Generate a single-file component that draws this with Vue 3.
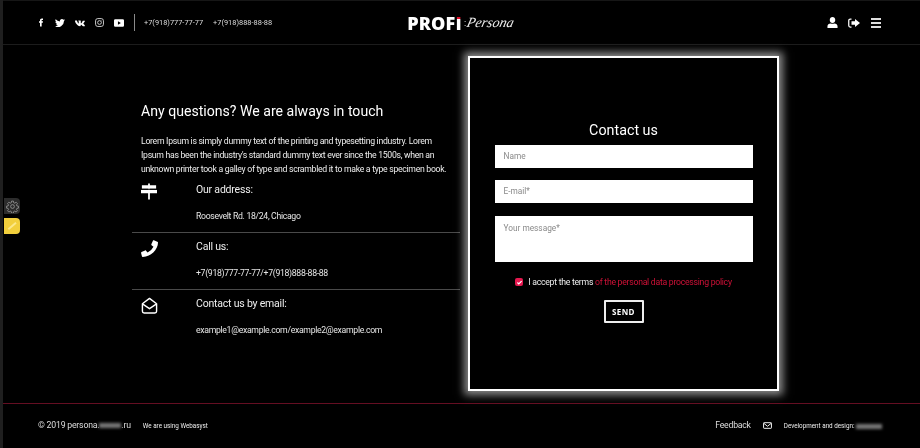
<script setup>
const rows = [
  { title: 'Our address:', text: 'Roosevelt Rd. 18/24, Chicago', icon: 'sign' },
  { title: 'Call us:', text: '+7(918)777-77-77/+7(918)888-88-88', icon: 'phone' },
  { title: 'Contact us by email:', text: 'example1@example.com/example2@example.com', icon: 'mail' }
]
</script>

<template>
  <div class="page">
    <header class="header">
      <div class="head-left">
        <div class="socials">
          <svg viewBox="0 0 24 24" width="8" height="9"><path fill="#fff" d="M14 8V6c0-1 .5-1.500 1.500-1.500H18V0h-3.500C11 0 9 2.200 9 5.500V8H6v4.500h3V24h5V12.500h3.500L18 8z"/></svg>
          <svg viewBox="0 0 24 24" width="10" height="10"><path fill="#fff" d="M24 4.600a10 10 0 0 1-2.800.8 5 5 0 0 0 2.200-2.700 10 10 0 0 1-3.100 1.200 4.900 4.900 0 0 0-8.400 4.500A14 14 0 0 1 1.700 3.200a4.900 4.900 0 0 0 1.500 6.600 5 5 0 0 1-2.200-.6c0 2.400 1.700 4.400 3.900 4.900a5 5 0 0 1-2.200.1 4.900 4.900 0 0 0 4.600 3.400A9.900 9.900 0 0 1 0 19.500 14 14 0 0 0 21.500 7c1-.7 1.900-1.500 2.500-2.400z"/></svg>
          <svg viewBox="0 0 24 24" width="10" height="10"><path fill="#fff" d="M23.500 17.500c-.7-1.300-2.500-2.900-3.400-3.700-.3-.3-.3-.5 0-.9.600-.8 2.500-3.400 3.200-4.700.4-.8.500-1.200.2-1.500-.2-.3-.6-.3-1-.3h-3.300c-.4 0-.7.100-.9.600-.5 1.300-2 4.300-3 5.300-.4.400-.7.400-1 .4-.2 0-.4-.3-.4-.8V7c0-.8-.1-1.300-.9-1.300H8.900c-.5 0-.9.300-.9.600 0 .6.900.7 1 2.600v2.900c0 1-.2 1.100-.4 1.100-.8 0-2.600-2.700-3.600-5.900-.2-.6-.5-.8-1-.8H.9c-.6 0-.9.300-.9.700 0 .7.900 4 4.100 8.200 2.100 2.900 5.100 4.500 7.800 4.500 1.500 0 1.800-.4 1.800-1.100 0-2.300-.1-2.500.6-2.500.4 0 1 .2 2.300 1.500 1.500 1.500 1.800 2.100 2.600 2.100h3.200c.9 0 1.400-.4 1.100-1.300z"/></svg>
          <svg viewBox="0 0 24 24" width="9" height="9" fill="none" stroke="#ccc" stroke-width="2.600"><rect x="1.500" y="1.500" width="21" height="21" rx="6"/><circle cx="12" cy="12" r="5"/><circle cx="18" cy="6" r="1" fill="#ccc" stroke="none"/></svg>
          <svg viewBox="0 0 24 18" width="10" height="8"><path fill="#fff" fill-rule="evenodd" d="M3 0h18a3 3 0 0 1 3 3v12a3 3 0 0 1-3 3H3a3 3 0 0 1-3-3V3a3 3 0 0 1 3-3zm6.500 5v8l7-4z"/></svg>
        </div>
        <span class="divider"></span>
        <span class="tel">+7(918)777-77-77</span>
        <span class="tel">+7(918)888-88-88</span>
      </div>
      <div class="logo">
        <span class="logo-main">PROF<span class="logo-i">I</span></span>
        <span class="logo-dots">:</span>
        <span class="logo-script">Persona</span>
      </div>
      <div class="head-right">
        <svg viewBox="0 0 24 24" width="11" height="11"><path fill="#fff" d="M12 0c3.500 0 6 2.700 6 6.500S15.500 13 12 13 6 10.300 6 6.500 8.500 0 12 0zM1 24v-4c0-3.500 3-5.500 7-6 2.500 1.200 5.500 1.200 8 0 4 .5 7 2.500 7 6v4z"/></svg>
        <svg viewBox="0 0 24 20" width="12" height="10"><path fill="#fff" d="M14 2l10 8-10 8v-4.500H7v-7h7z"/><path fill="none" stroke="#fff" stroke-width="2.500" d="M7 2H4.500A3 3 0 0 0 1.500 5v10a3 3 0 0 0 3 3H7"/></svg>
        <div class="burger"><i></i><i></i><i></i></div>
      </div>
    </header>

    <div class="side-tabs">
      <div class="tab tab-gear">
        <svg viewBox="0 0 24 24" width="13" height="13" fill="none" stroke="#9a9a9a" stroke-width="1.500"><circle cx="12" cy="12" r="3.500"/><path d="M10.300 2h3.400l.5 3 2 .9 2.500-1.800 2.400 2.400-1.800 2.500.9 2 3 .5v3.400l-3 .5-.9 2 1.800 2.500-2.400 2.400-2.500-1.800-2 .9-.5 3h-3.400l-.5-3-2-.9-2.500 1.800-2.400-2.400 1.800-2.500-.9-2-3-.5v-3.400l3-.5.9-2-1.800-2.500 2.400-2.400 2.500 1.800 2-.9z"/></svg>
      </div>
      <div class="tab tab-note"><span class="note-mark"></span></div>
    </div>

    <main class="main">
      <section class="info">
        <div class="intro">
          <h2>Any questions? We are always in touch</h2>
          <p>Lorem Ipsum is simply dummy text of the printing and typesetting industry. Lorem Ipsum has been the industry's standard dummy text ever since the 1500s, when an unknown printer took a galley of type and scrambled it to make a type specimen book.</p>
        </div>
        <div v-for="row in rows" :key="row.title" class="row">
          <div class="row-icon">
            <svg v-if="row.icon === 'sign'" viewBox="0 0 18 18" width="16" height="17"><path fill="#fff" d="M8 0h2v2h7v4H10v1h8v4h-8v7H8v-7H0V7h8V6H1V2h7z"/><path stroke="#000" stroke-width="1.200" d="M0 6.500h18"/></svg>
            <svg v-else-if="row.icon === 'phone'" viewBox="0 0 24 24" width="17" height="17"><path fill="#fff" d="M23 2.500 18.200.5c-.5-.2-1.100 0-1.400.5l-2.200 5.100c-.2.400-.1 1 .3 1.300l2.700 2.200a17 17 0 0 1-8.300 8.100l-2.200-2.700c-.3-.4-.9-.5-1.300-.3L.7 16.900c-.5.200-.7.800-.6 1.300l1.200 4.900c.1.500.5.800 1 .8C13.500 24 24 13.600 24 3.500c0-.500-.4-.8-1-1z"/></svg>
            <svg v-else viewBox="0 0 24 24" width="17" height="17" fill="none" stroke="#fff" stroke-width="2"><path stroke-linejoin="round" d="M2 9.500 12 2l10 7.500V20a2.500 2.500 0 0 1-2.500 2.500h-15A2.500 2.500 0 0 1 2 20z"/><path stroke-linejoin="round" d="M2.500 10 12 16.500 21.500 10"/></svg>
          </div>
          <div class="row-body">
            <div class="row-title">{{ row.title }}</div>
            <div class="row-text">{{ row.text }}</div>
          </div>
        </div>
      </section>

      <section class="card">
        <h3>Contact us</h3>
        <div class="field">Name</div>
        <div class="field field-mail">E-mail*</div>
        <div class="field field-area">Your message*</div>
        <div class="terms">
          <span class="check"><svg viewBox="0 0 10 10" width="7" height="7"><path fill="none" stroke="#fff" stroke-width="1.800" d="M2 5l2 2 4-4"/></svg></span>
          <span class="terms-text">I accept the terms <span class="red">of the personal data processing policy</span></span>
        </div>
        <div class="send">SEND</div>
      </section>
    </main>

    <footer class="footer">
      <div class="foot-left">
        <span class="copy">© 2019 persona.<span class="smudge smudge-a"></span>.ru</span>
        <span class="small">We are using Webasyst</span>
      </div>
      <div class="foot-right">
        <span class="feedback">Feedback</span>
        <svg viewBox="0 0 24 18" width="9" height="7" fill="none" stroke="#fff" stroke-width="2.500"><rect x="1.500" y="1.500" width="21" height="15" rx="1.500"/><path d="M2 3l10 8 10-8"/></svg>
        <span class="small dev">Development and design: <span class="smudge smudge-b"></span></span>
      </div>
    </footer>
  </div>
</template>

<style>
html, body { margin: 0; background: #000; }
</style>

<style scoped>
.page {
  position: relative;
  width: 917px;
  height: 448px;
  overflow: hidden;
  background: #000;
  border-left: 3px solid #1f1f1f;
  color: #fff;
  font-family: Roboto, "Liberation Sans", sans-serif;
  filter: blur(0.35px);
}
.header {
  box-sizing: border-box;
  height: 45px;
  border-top: 1px solid #161616;
  border-bottom: 1px solid #1c1c1c;
  padding: 0 39px 0 34px;
  display: grid;
  grid-template-columns: 1fr auto 1fr;
  align-items: center;
}
.head-left { display: flex; align-items: center; }
.socials { display: flex; align-items: center; gap: 10px; width: 97px; }
.divider { width: 1px; height: 17px; background: #8a8a8a; margin-right: 9px; }
.tel { font-size: 7.400px; margin-right: 10px; color: #dcdcdc; white-space: nowrap; }
.logo { display: flex; align-items: center; justify-content: center; white-space: nowrap; margin-left: 3px; }
.logo-main { font: 800 18px/1 "Open Sans", sans-serif; letter-spacing: .2px; }
.logo-i {
  background: linear-gradient(#e3112c 0 34%, #fff 34%);
  -webkit-background-clip: text;
  background-clip: text;
  color: transparent;
}
.logo-dots { font-size: 9px; margin: 0 1px 0 2px; }
.logo-script { font: italic 14px "Liberation Serif", serif; transform: skewX(-14deg); color: #eee; }
.head-right { display: flex; align-items: center; justify-content: flex-end; gap: 10px; }
.burger { display: flex; flex-direction: column; gap: 2px; width: 10px; margin-left: 1px; }
.burger i { display: block; height: 2px; background: #ddd; }

.side-tabs { position: absolute; left: 1px; top: 198px; display: flex; flex-direction: column; gap: 4px; }
.tab { width: 16px; height: 16px; display: flex; align-items: center; justify-content: center; }
.tab-gear { background: #2c2c2c; border-radius: 0 4px 4px 0; }
.tab-note { background: #f2cf3c; border-radius: 0 4px 4px 0; }
.note-mark { width: 10px; height: 1.500px; background: #fbe88a; transform: rotate(-40deg); }

.main {
  height: 358px;
  box-sizing: border-box;
  padding: 11px 0 0 129px;
  display: flex;
  align-items: flex-start;
  gap: 8px;
}
.info { width: 328px; padding-top: 47px; }
.intro { padding-left: 9px; }
.intro h2 { margin: 0 0 14px; font-size: 14.100px; line-height: 17px; font-weight: 400; white-space: nowrap; }
.intro p { margin: 0; font-size: 8.700px; letter-spacing: -.3px; line-height: 14px; width: 312px; color: #eee; }
.row {
  height: 57px;
  box-sizing: border-box;
  display: flex;
  padding: 7px 0 0 9px;
  border-bottom: 1px solid #4a4a4a;
}
.row:last-child { border-bottom: 0; }
.row-icon { width: 55px; flex: none; }
.row-title { font-size: 10.500px; letter-spacing: -.2px; line-height: 14px; color: #eee; margin-bottom: 13px; }
.row-text { font-size: 8.700px; letter-spacing: -.32px; line-height: 12px; color: #e6e6e6; white-space: nowrap; }

.card {
  width: 311px;
  height: 335px;
  box-sizing: border-box;
  border: 2px solid #fff;
  background: #000;
  box-shadow: 0 0 8px 4px rgba(255,255,255,.55);
  padding: 64px 25px 0;
  display: flex;
  flex-direction: column;
  align-items: center;
}
.card h3 { margin: 0 0 6px; font-size: 14.300px; line-height: 17px; font-weight: 400; }
.field {
  box-sizing: border-box;
  width: 258px;
  height: 23px;
  flex: none;
  margin-bottom: 12px;
  background: #fff;
  color: #8a8a8a;
  font-size: 8.300px;
  line-height: 23px;
  padding-left: 9px;
}
.field-mail { margin-bottom: 13px; }
.field-area { height: 46px; line-height: 12px; padding-top: 6px; margin-bottom: 14px; }
.terms { display: flex; align-items: center; gap: 5px; font-size: 8.700px; letter-spacing: -.27px; white-space: nowrap; margin-top: 1px; }
.check { width: 8px; height: 8px; border-radius: 2px; background: #e5184f; display: flex; align-items: center; justify-content: center; }
.terms-text { color: #eee; }
.red { color: #d01137; }
.send {
  margin-top: 13px;
  box-sizing: border-box;
  width: 40px;
  height: 23px;
  flex: none;
  border: 2px solid #eee;
  border-radius: 1px;
  font: 700 8px/19px "Open Sans", sans-serif;
  letter-spacing: .4px;
  text-align: center;
}

.footer {
  box-sizing: border-box;
  height: 45px;
  border-top: 1px solid #640e22;
  padding: 0 38px 2px 35px;
  display: flex;
  justify-content: space-between;
  align-items: center;
}
.foot-left, .foot-right { display: flex; align-items: center; }
.copy { font-size: 8.700px; letter-spacing: -.2px; color: #ddd; margin-right: 12px; white-space: nowrap; }
.small { font-size: 6.300px; color: #eee; white-space: nowrap; margin-top: 2px; }
.feedback { font-size: 8.700px; letter-spacing: -.22px; color: #ddd; margin-right: 12px; }
.dev { margin-left: 12px; }
.smudge { display: inline-block; height: 5px; background: #777; filter: blur(1.500px); vertical-align: middle; }
.smudge-a { width: 22px; }
.smudge-b { width: 26px; }
</style>
